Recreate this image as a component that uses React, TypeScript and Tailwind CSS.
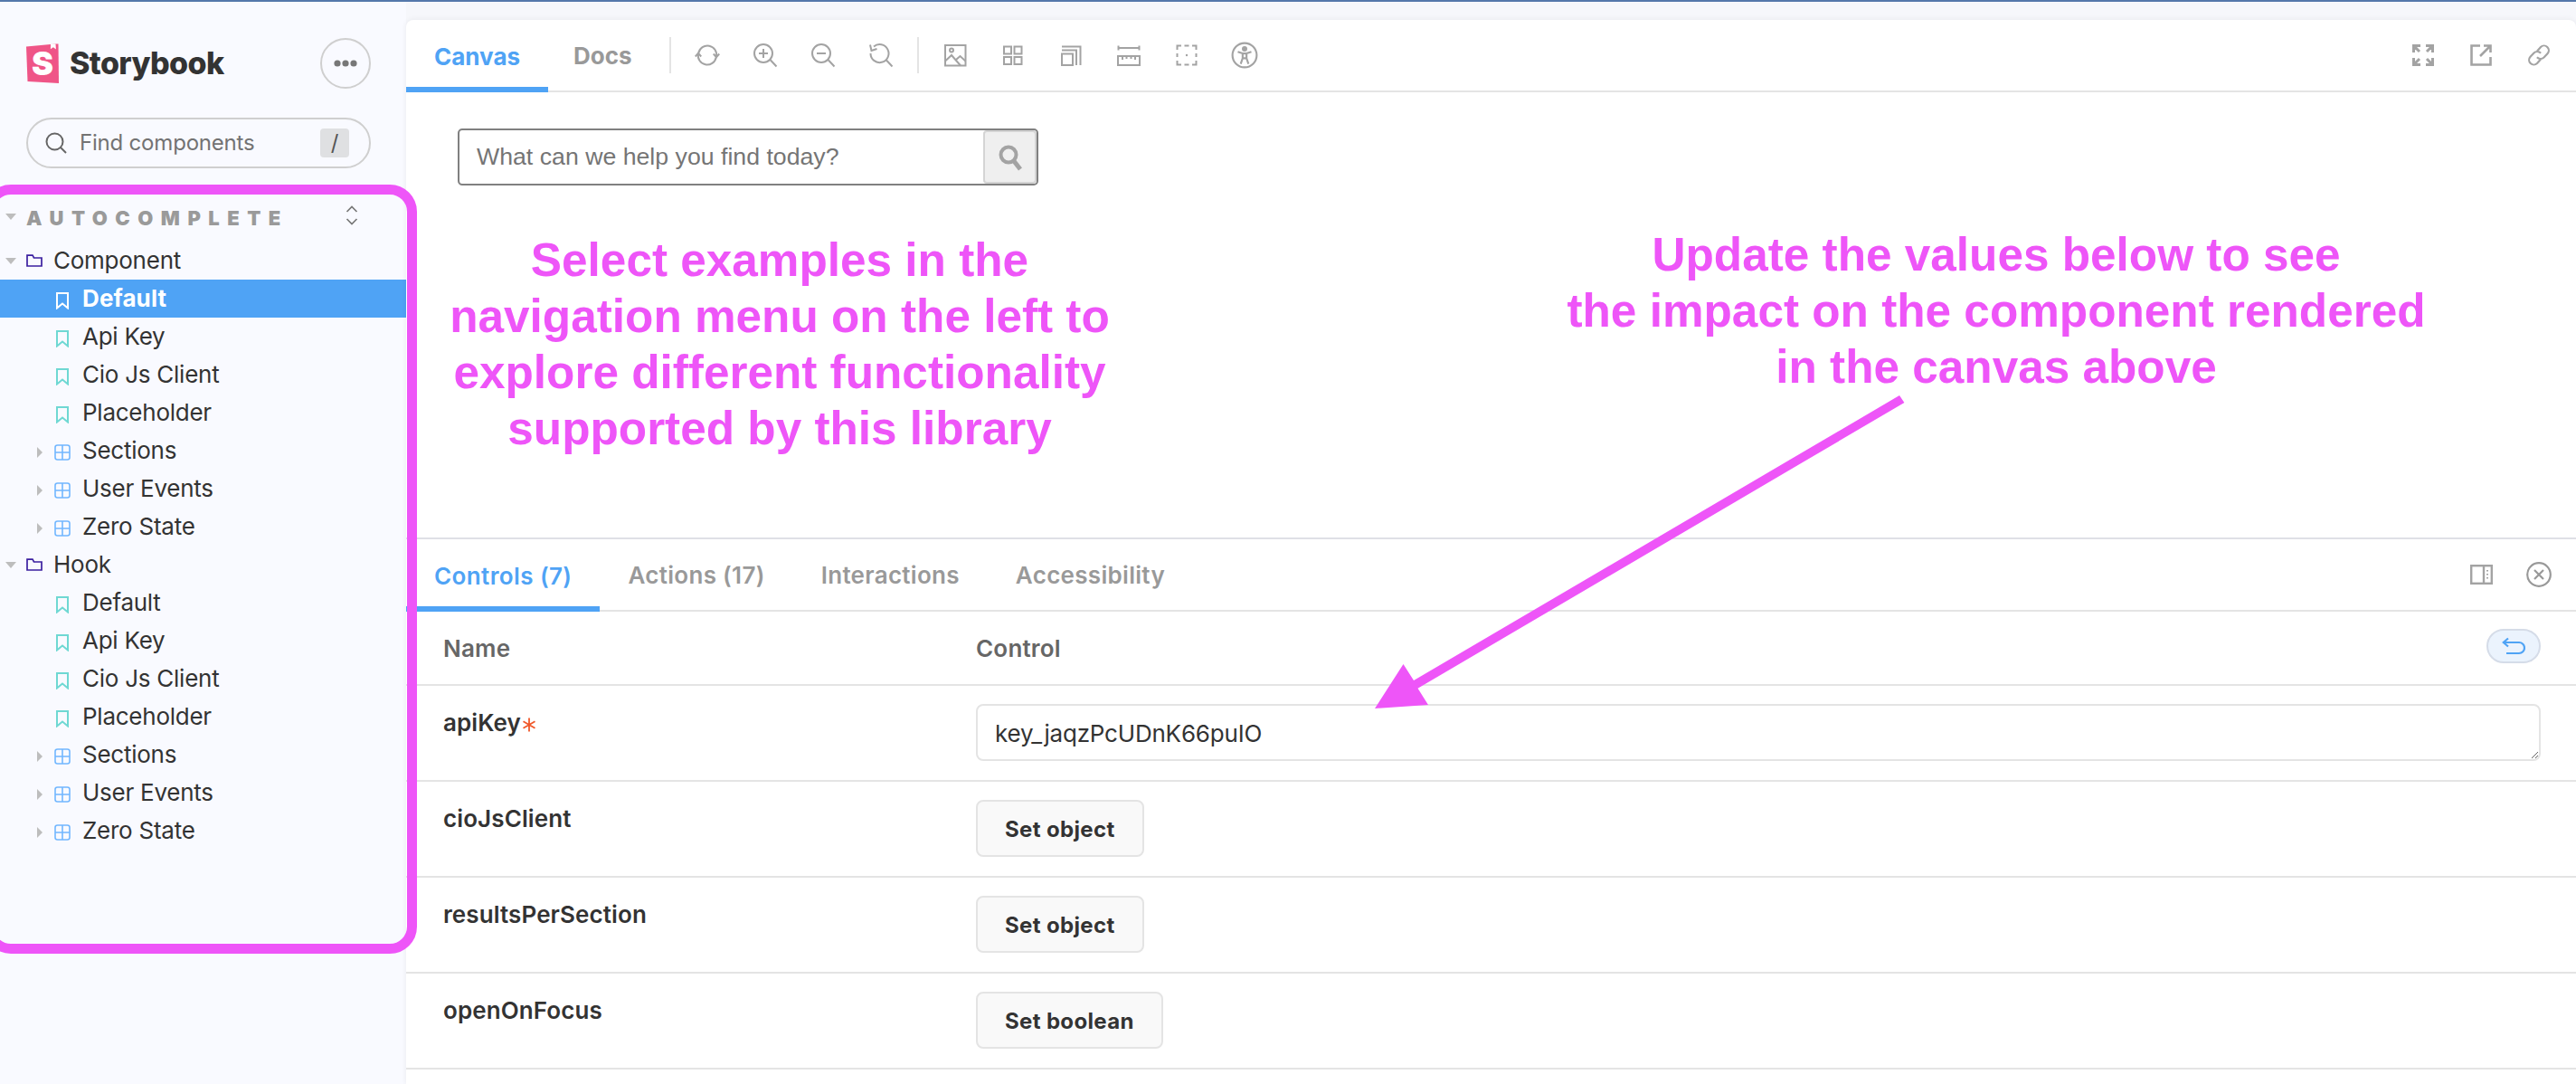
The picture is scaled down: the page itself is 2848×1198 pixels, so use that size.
import React from "react";

const INTER = "[font-family:Inter,'Noto_Sans',sans-serif]";

function Ic({ size = 28, children, className = "" }: { size?: number; children: React.ReactNode; className?: string }) {
  return (
    <svg width={size} height={size} viewBox="0 0 28 28" fill="none" stroke="currentColor" strokeWidth={2} className={className}>
      {children}
    </svg>
  );
}

const IconSync = () => (
  <Ic>
    <path d="M4.3 11.5A10 10 0 0 1 24 15.5" />
    <path d="M23.7 16.5A10 10 0 0 1 4 12.5" />
    <path d="M20.8 12.5l3.2 3.8 3.2-3.8" />
    <path d="M0.8 15.5L4 11.7l3.2 3.8" />
  </Ic>
);
const IconZoomIn = () => (
  <Ic>
    <circle cx="12" cy="12" r="10" />
    <path d="M19.5 19l7 7.5M12 7v10M7 12h10" />
  </Ic>
);
const IconZoomOut = () => (
  <Ic>
    <circle cx="12" cy="12" r="10" />
    <path d="M19.5 19l7 7.5M7 12h10" />
  </Ic>
);
const IconZoomReset = () => (
  <Ic>
    <path d="M6 4.5A10 10 0 1 1 2.5 12" />
    <path d="M19.5 19l7 7.5" />
    <path d="M2 2.5l1.5 6.5 6-2" />
  </Ic>
);
const IconPhoto = () => (
  <Ic>
    <rect x="3" y="3" width="22.5" height="22.5" />
    <circle cx="10" cy="8.5" r="2" />
    <path d="M3 20.5l7-6.5 10 11.5M15 19l4.5-4 6 5.5" />
  </Ic>
);
const IconGrid = () => (
  <Ic>
    <rect x="4" y="4.5" width="8" height="8" />
    <rect x="15.5" y="4.5" width="8" height="8" />
    <rect x="4" y="16" width="8" height="8" />
    <rect x="15.5" y="16" width="8" height="8" />
  </Ic>
);
const IconLayers = () => (
  <Ic>
    <rect x="4" y="12.5" width="12" height="12.5" />
    <path d="M4 8.5h16V25M4 4.5h20.5V25" />
  </Ic>
);
const IconRuler = () => (
  <Ic>
    <path d="M2 6h24M2.5 3.5v5M25.5 3.5v5" />
    <rect x="2" y="15" width="24" height="10" />
    <path d="M7 15v4M11.5 15v3M16.5 15v3M21 15v4" />
  </Ic>
);
const IconOutline = () => (
  <Ic>
    <path d="M3.5 8V3.5H8M20 3.5h4.5V8M24.5 20v4.5H20M8 24.5H3.5V20" />
    <path d="M11.5 3.5h5M11.5 24.5h5M3.5 12v4M24.5 12v4" />
    <circle cx="14" cy="14" r="1.2" fill="currentColor" stroke="none" />
  </Ic>
);
const IconA11y = () => (
  <Ic size={30}>
    <circle cx="14" cy="14" r="12.5" />
    <circle cx="14" cy="7.5" r="1.8" fill="currentColor" />
    <path d="M7 10.5l5 1.7v5L10 23M21 10.5l-5 1.7v5l2 5.8M12 12.2h4v5h-4z" />
  </Ic>
);
const IconExpand = () => (
  <svg width="24" height="24" viewBox="0 0 24 24" fill="none" stroke="currentColor" strokeWidth={3}>
    <path d="M1.5 9V1.5H9M1.5 1.5l6.5 6.5M15 1.5h7.5V9M22.5 1.5L16 8M1.5 15v7.5H9M1.5 22.5L8 16M22.5 15v7.5H15M22.5 22.5L16 16" />
  </svg>
);
const IconOpen = () => (
  <svg width="24" height="24" viewBox="0 0 24 24" fill="none" stroke="currentColor" strokeWidth={2.6}>
    <path d="M11 1.5H1.5v21h21V14" />
    <path d="M11 13L22 2M15 1.5h7.5V9" />
  </svg>
);
const IconLink = () => (
  <svg width="26" height="26" viewBox="0 0 26 26" fill="none" stroke="currentColor" strokeWidth={2.2}>
    <path d="M11 8.5l4-4.5a5.2 5.2 0 0 1 7.5 7.2l-4 4.3a5.2 5.2 0 0 1-7.6-.3" />
    <path d="M15 17.5l-4 4.5a5.2 5.2 0 0 1-7.5-7.2l4-4.3a5.2 5.2 0 0 1 7.6.3" />
  </svg>
);

const Bookmark = ({ active }: { active?: boolean }) => (
  <svg width="14" height="19" viewBox="0 0 14 19" fill="none" stroke="currentColor" strokeWidth={2} className={active ? "text-white" : "text-[#6fd8d3]"}>
    <path d="M1 1h12v16.5L7 12.5 1 17.5z" />
  </svg>
);
const GridIcon = () => (
  <svg width="18" height="18" viewBox="0 0 18 18" fill="none" stroke="currentColor" strokeWidth={1.6} className="text-[#72b7ff]">
    <rect x="1" y="1" width="16" height="16" rx="2.5" />
    <path d="M9 1v16M1 9h16" />
  </svg>
);
const FolderIcon = () => (
  <svg width="18" height="14" viewBox="0 0 18 14" fill="none" stroke="currentColor" strokeWidth={1.7} className="text-[#3b1fa0]">
    <path d="M1 13V1.2h6L8.5 4H17v9z" />
  </svg>
);
const CaretDown = () => (
  <svg width="12" height="7" viewBox="0 0 12 7" fill="#bdbdbd">
    <path d="M0 0h12L6 7z" />
  </svg>
);
const CaretRight = () => (
  <svg width="6" height="12" viewBox="0 0 6 12" fill="#bdbdbd">
    <path d="M0 0l6 6-6 6z" />
  </svg>
);

const rowText = `text-[26px] leading-[42px] tracking-[-0.25px] text-[#333]`;

const Folder = ({ label }: { label: string }) => (
  <div className="flex h-[42px] items-center pl-[6px]">
    <span className="flex w-[12px] items-center"><CaretDown /></span>
    <span className="ml-[11px] flex w-[18px] items-center"><FolderIcon /></span>
    <span className={`ml-[12px] ${rowText}`}>{label}</span>
  </div>
);
const Leaf = ({ label, active }: { label: string; active?: boolean }) => (
  <div className={`flex h-[42px] items-center pl-[62px] ${active ? "bg-[#4fa3f5]" : ""}`}>
    <span className="flex w-[14px] translate-y-[2px] items-center"><Bookmark active={active} /></span>
    {active ? (
      <span className="ml-[15px] text-[26px] font-bold leading-[42px] tracking-[0.1px] text-white">{label}</span>
    ) : (
      <span className={`ml-[15px] ${rowText}`}>{label}</span>
    )}
  </div>
);
const Group = ({ label }: { label: string }) => (
  <div className="flex h-[42px] items-center pl-[41px]">
    <span className="flex w-[6px] translate-y-[2px] items-center"><CaretRight /></span>
    <span className="ml-[13px] flex w-[18px] translate-y-[2px] items-center"><GridIcon /></span>
    <span className={`ml-[13px] ${rowText}`}>{label}</span>
  </div>
);

const Tree = ({ label, activeFirst }: { label: string; activeFirst?: boolean }) => (
  <>
    <Folder label={label} />
    <Leaf label="Default" active={activeFirst} />
    <Leaf label="Api Key" />
    <Leaf label="Cio Js Client" />
    <Leaf label="Placeholder" />
    <Group label="Sections" />
    <Group label="User Events" />
    <Group label="Zero State" />
  </>
);

function Sidebar() {
  return (
    <aside className="flex w-[449px] shrink-0 flex-col bg-[#f9faff] pt-[40px]">
      <div className="flex h-[56px] items-center justify-between pl-[29px] pr-[39px]">
        <div className="flex items-center">
          <svg width="36" height="44" viewBox="0 0 36 44">
            <path d="M0 3.5L32 0.5 35.5 0.5 36 44 1.5 42z" fill="#ef5587" />
            <path d="M27 0.5h5.5l0.4 6-3-2.2-3 2z" fill="#fff" />
            <text x="18" y="35" textAnchor="middle" fontFamily="Inter, sans-serif" fontWeight="900" fontSize="36" fill="#fff">S</text>
          </svg>
          <span className={`${INTER} ml-[12px] text-[34px] font-extrabold leading-none tracking-[-0.6px] text-[#333]`}>Storybook</span>
        </div>
        <div className="flex h-[56px] w-[56px] items-center justify-center rounded-full border-2 border-[#cfcfcf]">
          <svg width="26" height="8" viewBox="0 0 26 8" fill="#777">
            <circle cx="4" cy="4" r="3.6" />
            <circle cx="13" cy="4" r="3.6" />
            <circle cx="22" cy="4" r="3.6" />
          </svg>
        </div>
      </div>
      <div className="mx-[29px] mr-[39px] mt-[32px] flex h-[56px] items-center rounded-full border-2 border-[#cfcfcf] pl-[19px] pr-[22px]">
        <svg width="24" height="24" viewBox="0 0 24 24" fill="none" stroke="#666" strokeWidth={2}>
          <circle cx="10.5" cy="10.5" r="9" />
          <path d="M17 17l6 6" />
        </svg>
        <span className="ml-[14px] flex-1 text-[24px] leading-none tracking-[-0.2px] text-[#737373]">Find components</span>
        <span className="flex h-[32px] w-[32px] items-center justify-center rounded-[4px] bg-[#dfe0e2] text-[24px] leading-none text-[#555]">/</span>
      </div>
      <div className="mt-[31px] flex h-[42px] items-center pl-[6px] pr-[53px]">
        <span className="flex w-[12px] translate-y-[1px] items-center"><CaretDown /></span>
        <span className="ml-[11px] flex-1 translate-y-[3px] text-[22px] font-black leading-none tracking-[8.5px] text-[#9a9a9a]">AUTOCOMPLETE</span>
        <svg width="14" height="22" viewBox="0 0 14 22" fill="none" stroke="#777" strokeWidth={1.7}>
          <path d="M1.5 7L7 1.5 12.5 7M1.5 15L7 20.5 12.5 15" />
        </svg>
      </div>
      <div className={`${INTER} mt-[8px]`}>
        <Tree label="Component" activeFirst />
        <Tree label="Hook" />
      </div>
    </aside>
  );
}

const ToolBtn = ({ children }: { children: React.ReactNode }) => (
  <span className="flex h-[40px] w-[64px] items-center justify-center text-[#a3a3a3]">{children}</span>
);
const Divider = ({ cls }: { cls: string }) => <span className={`h-[40px] w-[2px] bg-[#e4e4e4] ${cls}`} />;

function Toolbar() {
  return (
    <div className="flex h-[80px] shrink-0 items-stretch border-b-2 border-[#e4e4e4]">
      <div className="-mb-[2px] flex items-center border-b-[6px] border-[#4fa3f5] px-[31px] pt-[6px] text-[26px] font-bold text-[#4fa3f5]">Canvas</div>
      <div className="flex items-center pl-[28px] pr-[29px] text-[26px] font-bold text-[#999]">Docs</div>
      <div className="ml-[12px] flex items-center">
        <Divider cls="" />
        <div className="ml-[8px] flex">
          <ToolBtn><IconSync /></ToolBtn>
          <ToolBtn><IconZoomIn /></ToolBtn>
          <ToolBtn><IconZoomOut /></ToolBtn>
          <ToolBtn><IconZoomReset /></ToolBtn>
        </div>
        <Divider cls="ml-[8px]" />
        <div className="ml-[8px] flex">
          <ToolBtn><IconPhoto /></ToolBtn>
          <ToolBtn><IconGrid /></ToolBtn>
          <ToolBtn><IconLayers /></ToolBtn>
          <ToolBtn><IconRuler /></ToolBtn>
          <ToolBtn><IconOutline /></ToolBtn>
          <ToolBtn><IconA11y /></ToolBtn>
        </div>
      </div>
      <div className="ml-auto flex items-center pr-[9px]">
        <ToolBtn><IconExpand /></ToolBtn>
        <ToolBtn><IconOpen /></ToolBtn>
        <ToolBtn><IconLink /></ToolBtn>
      </div>
    </div>
  );
}

function CanvasArea() {
  return (
    <div className="h-[492px] shrink-0 pl-[57px] pt-[40px]">
      <div className="flex h-[63px] w-[642px] items-stretch rounded-[5px] border-2 border-[#808080] bg-white">
        <div className="flex flex-1 items-center pl-[19px] font-['Liberation_Sans',Arial,sans-serif] text-[26.7px] text-[#757575]">What can we help you find today?</div>
        <div className="flex w-[59px] items-center justify-center rounded-[4px] border-2 border-[#d4d4d4] bg-[#efefef]">
          <svg width="28" height="30" viewBox="0 0 28 30" fill="none" stroke="#a3a3a3">
            <circle cx="12" cy="12" r="8.5" strokeWidth={4} />
            <path d="M18 19l7 9" strokeWidth={5} />
          </svg>
        </div>
      </div>
    </div>
  );
}

const AddonTab = ({ label, active }: { label: string; active?: boolean }) => (
  <div className={active
    ? "-mb-[2px] flex items-center border-b-[6px] border-[#4fa3f5] px-[31px] pt-[6px] text-[26px] font-semibold tracking-[0.4px] text-[#4fa3f5]"
    : "flex items-center px-[31px] pt-[1px] text-[26px] font-semibold tracking-[0.3px] text-[#999]"}>{label}</div>
);

const SetBtn = ({ label }: { label: string }) => (
  <div className="flex h-[63px] items-center rounded-[8px] border-2 border-[#e4e4e4] bg-[#f9f9f9] px-[30px] pt-[2px] text-[24px] font-bold tracking-[0.35px] text-[#333]">{label}</div>
);

const Row = ({ name, required, children }: { name: string; required?: boolean; children: React.ReactNode }) => (
  <div className="flex h-[106px] items-start border-b-2 border-[#e4e4e4] pl-[41px] pr-[39px] pt-[20px]">
    <div className="flex w-[589px] items-center pt-[5px] text-[26px] font-semibold leading-[32px] tracking-[0.1px] text-[#333]">
      {name}
      {required && (
        <svg width="16" height="16" viewBox="0 0 16 16" fill="none" stroke="#f0582a" strokeWidth={1.8} className="ml-[1px] mt-[4px]">
          <path d="M8 0.5v15M1.5 4.2l13 7.6M14.5 4.2l-13 7.6" />
        </svg>
      )}
    </div>
    <div className="flex-1">{children}</div>
  </div>
);

function Addon() {
  return (
    <div className="flex flex-1 flex-col border-t-2 border-[#dfe0e6]">
      <div className="flex h-[80px] shrink-0 items-stretch border-b-2 border-[#e4e4e4]">
        <AddonTab label="Controls (7)" active />
        <AddonTab label="Actions (17)" />
        <AddonTab label="Interactions" />
        <AddonTab label="Accessibility" />
        <div className="ml-auto flex items-center pr-[9px]">
          <ToolBtn>
            <svg width="25" height="22" viewBox="0 0 25 22" fill="none" stroke="currentColor" strokeWidth={2.4}>
              <rect x="1.2" y="1.2" width="22.6" height="19.6" />
              <path d="M15 1.2v19.6" />
              <path d="M19 6v1.5M19 10v1.5M19 14v1.5" strokeWidth={2} />
            </svg>
          </ToolBtn>
          <ToolBtn>
            <span className="text-[#999]">
              <svg width="28" height="28" viewBox="0 0 28 28" fill="none" stroke="currentColor" strokeWidth={2.2}>
                <circle cx="14" cy="14" r="12.8" />
                <path d="M9 9l10 10M19 9L9 19" />
              </svg>
            </span>
          </ToolBtn>
        </div>
      </div>
      <div className="flex h-[82px] shrink-0 items-center justify-between border-b-2 border-[#e4e4e4] pl-[41px] pr-[39px]">
        <div className="flex text-[26px] font-semibold tracking-[0.2px] text-[#666]">
          <span className="w-[589px]">Name</span>
          <span>Control</span>
        </div>
        <div className="-mt-[4px] flex h-[38px] w-[60px] items-center justify-center rounded-full border-2 border-[#d5dce8] bg-[#ebf3fd]">
          <svg width="26" height="20" viewBox="0 0 26 20" fill="none" stroke="#4fa3f5" strokeWidth={2.2}>
            <path d="M7 1.5L1.8 6 7 10.5" />
            <path d="M2 6h17a5.5 5.5 0 0 1 0 12H5" />
          </svg>
        </div>
      </div>
      <Row name="apiKey" required>
        <textarea
          readOnly
          value="key_jaqzPcUDnK66puIO"
          className="block h-[63px] w-full resize-y rounded-[8px] border-2 border-[#e4e4e4] px-[19px] pb-[11px] pt-[13px] text-[26px] leading-[36px] tracking-[-0.2px] text-[#333] outline-none"
        />
      </Row>
      <Row name="cioJsClient"><div className="flex"><SetBtn label="Set object" /></div></Row>
      <Row name="resultsPerSection"><div className="flex"><SetBtn label="Set object" /></div></Row>
      <Row name="openOnFocus"><div className="flex"><SetBtn label="Set boolean" /></div></Row>
    </div>
  );
}

export default function App() {
  return (
    <div className={`relative flex h-[1198px] w-[2848px] flex-col overflow-hidden bg-[#f9faff] ${INTER}`}>
      <div className="h-[2px] shrink-0 bg-[#5478ab]" />
      <div className="flex flex-1">
        <Sidebar />
        <div className="flex flex-1 flex-col bg-[#f6f7fb] pt-[20px]">
          <main className="flex flex-1 flex-col rounded-t-[8px] bg-white shadow-[0_0_6px_rgba(0,0,0,0.07)]">
            <Toolbar />
            <CanvasArea />
            <Addon />
          </main>
        </div>
      </div>

      {/* Annotations laid over the screenshot */}
      <div className="pointer-events-none absolute left-[-18px] top-[204px] h-[850px] w-[479px] rounded-[30px] border-[11px] border-[#ee55f8]" />
      <div className="pointer-events-none absolute left-[462px] top-[257px] w-[800px] text-center font-['Liberation_Sans',Arial,sans-serif] text-[51.3px] font-bold leading-[62px] text-[#ee55f8]">
        Select examples in the<br />navigation menu on the left to<br />explore different functionality<br />supported by this library
      </div>
      <div className="pointer-events-none absolute left-[1707px] top-[251px] w-[1000px] text-center font-['Liberation_Sans',Arial,sans-serif] text-[51.3px] font-bold leading-[62px] text-[#ee55f8]">
        Update the values below to see<br />the impact on the component rendered<br />in the canvas above
      </div>
      <svg className="pointer-events-none absolute left-0 top-0" width="2848" height="1198" viewBox="0 0 2848 1198">
        <polygon points="2100,437 2105.4,445 1567.5,760.7 1579,779 1520,783 1551.5,734 1563,752" fill="#ee55f8" />
      </svg>
    </div>
  );
}
